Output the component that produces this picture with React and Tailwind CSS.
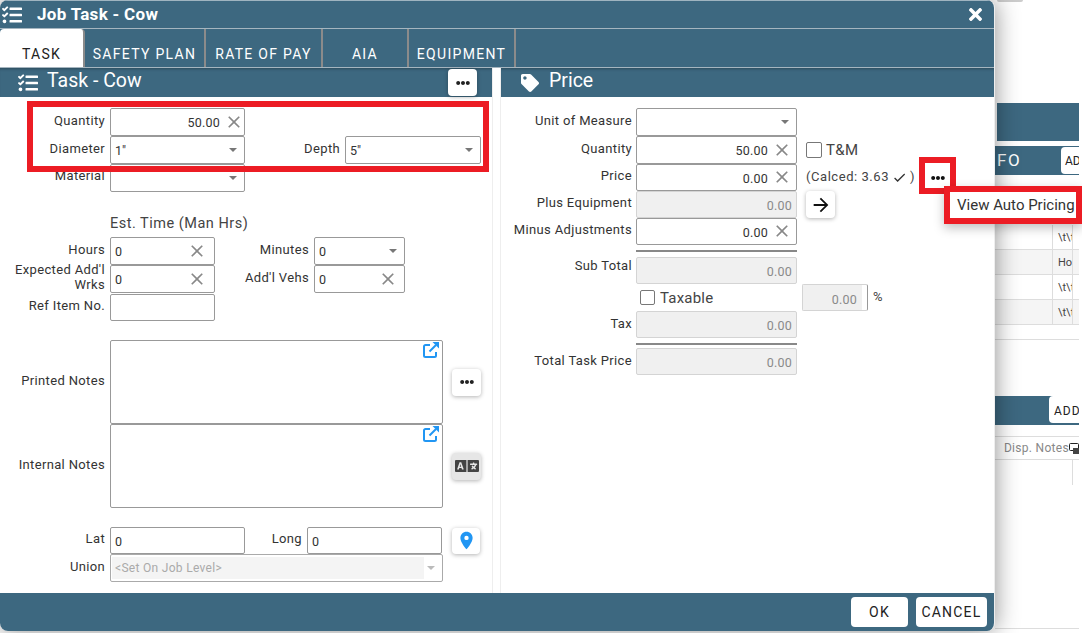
import { FaTasks, FaTag, FaTimes, FaEllipsisH, FaLanguage } from 'react-icons/fa';
import { MdCheck, MdArrowForward, MdLocationOn, MdClose } from 'react-icons/md';

const tabs = [
  { name: 'TASK', w: 'w-[85px]', active: true },
  { name: 'SAFETY PLAN', w: 'w-[121px]' },
  { name: 'RATE OF PAY', w: 'w-[117px]' },
  { name: 'AIA', w: 'w-[86px]' },
  { name: 'EQUIPMENT', w: 'w-[107px]' },
];

function Caret({ light }) {
  return (
    <svg width="8" height="4" viewBox="0 0 8 4" className="ml-auto mr-[7px] shrink-0">
      <path d="M0 0h8L4 4z" fill={light ? '#bbb' : '#777'} />
    </svg>
  );
}

function Field({ w, value, clear, right, disabled, h = 'h-[28px]' }) {
  return (
    <div className={`${w} ${h} shrink-0 flex items-center rounded-[2px] border ${disabled ? 'border-[#d4d4d4] bg-[#f0f0f0] text-[#8a8a8a]' : 'border-[#999] bg-white text-[#333]'} text-[12.5px] tracking-[0.2px]`}>
      <span className={`flex-1 pt-[3px] px-[4px] ${right ? 'text-right' : ''}`}>{value}</span>
      {clear && <MdClose className={`text-[#888] text-[20px] shrink-0 -mt-[1px] ${clear}`} />}
    </div>
  );
}

function Select({ w, value }) {
  return (
    <div className={`${w} h-[28px] shrink-0 flex items-center rounded-[2px] border border-[#999] bg-white text-[12.5px] text-[#333]`}>
      <span className="pl-[4px] pt-[3px]">{value}</span>
      <Caret />
    </div>
  );
}

function Label({ w, pb = 'pb-[4px]', children }) {
  return (
    <div className={`${w} ${pb} shrink-0 text-right text-[13px] leading-[15px] tracking-[0.35px] text-[#333]`}>{children}</div>
  );
}

function Row({ children, h = 'h-[28px]', className = '' }) {
  return <div className={`flex items-center ${h} ${className}`}>{children}</div>;
}

function WhiteButton({ children, className = '' }) {
  return (
    <div className={`flex items-center justify-center rounded-[4px] bg-white shadow-[0_1px_4px_rgba(0,0,0,0.3)] ${className}`}>{children}</div>
  );
}

function OpenIcon() {
  return (
    <svg width="16" height="16" viewBox="0 0 16 16" fill="none" stroke="#2196f3" strokeWidth="2" className="mr-[3px] mt-[1px]">
      <path d="M7 3H2.500a1.500 1.500 0 0 0-1.500 1.500v9A1.500 1.500 0 0 0 2.500 15h9a1.500 1.500 0 0 0 1.500-1.500V10" />
      <path d="M6.500 9.500L13 3" />
      <path d="M9.500 0h6.500v6.500z" fill="#2196f3" stroke="none" />
    </svg>
  );
}

function NoteBox() {
  return (
    <div className="w-[333px] h-[84px] shrink-0 flex justify-end rounded-[2px] border border-[#999] bg-white">
      <OpenIcon />
    </div>
  );
}

function SectionHeader({ icon, title, children }) {
  return (
    <div className="h-[29px] flex items-center bg-[#3d6880] text-white shadow-[inset_0_3px_3px_-2px_rgba(0,0,0,0.3)]">
      {icon}
      <span className="text-[19.5px] leading-none -mt-[3px]">{title}</span>
      {children}
    </div>
  );
}

function TaskPanel() {
  return (
    <div className="w-[493px] shrink-0 border-r border-[#eee]">
      <SectionHeader icon={<FaTasks className="text-[20px] ml-[18px] mr-[9px]" />} title="Task - Cow">
        <WhiteButton className="ml-auto mr-[15px] w-[29px] h-[27px] text-[#222] text-[14px]"><FaEllipsisH /></WhiteButton>
      </SectionHeader>
      <div className="pt-[11px]">
        <Row>
          <Label w="w-[105px]">Quantity</Label>
          <div className="ml-[5px]"><Field w="w-[135px]" value="50.00" right clear="mr-0" /></div>
        </Row>
        <Row>
          <Label w="w-[105px]">Diameter</Label>
          <div className="ml-[5px]"><Select w="w-[135px]" value={'1"'} /></div>
          <Label w="w-[95px]">Depth</Label>
          <div className="ml-[5px]"><Select w="w-[136px]" value={'5"'} /></div>
        </Row>
        <Row h="h-[27px]">
          <Label w="w-[105px]">Material</Label>
          <div className="ml-[5px]"><Select w="w-[135px]" value="" /></div>
        </Row>
        <div className="ml-[110px] mt-[24px] h-[22px] text-[14.5px] leading-[18px] tracking-[0.5px] text-[#444]">Est. Time (Man Hrs)</div>
        <Row>
          <Label w="w-[105px]">Hours</Label>
          <div className="ml-[5px]"><Field w="w-[105px]" value="0" clear="mr-[7px]" /></div>
          <Label w="w-[94px]">Minutes</Label>
          <div className="ml-[5px]"><Select w="w-[91px]" value="0" /></div>
        </Row>
        <Row>
          <Label w="w-[105px]">Expected Add'l Wrks</Label>
          <div className="ml-[5px]"><Field w="w-[105px]" value="0" clear="mr-[7px]" /></div>
          <Label w="w-[94px]">Add'l Vehs</Label>
          <div className="ml-[5px]"><Field w="w-[91px]" value="0" clear="mr-[6px]" /></div>
        </Row>
        <Row h="h-[27px]" className="mt-[1px]">
          <Label w="w-[105px]">Ref Item No.</Label>
          <div className="ml-[5px]"><Field w="w-[105px]" value="" h="h-[27px]" /></div>
        </Row>
        <div className="flex items-center mt-[19px]">
          <Label w="w-[105px]">Printed Notes</Label>
          <div className="ml-[5px]"><NoteBox /></div>
          <WhiteButton className="ml-[9px] w-[29px] h-[27px] text-[#222] text-[14px]"><FaEllipsisH /></WhiteButton>
        </div>
        <div className="flex items-center">
          <Label w="w-[105px]">Internal Notes</Label>
          <div className="ml-[5px]"><NoteBox /></div>
          <WhiteButton className="ml-[9px] w-[29px] h-[27px] !bg-[#e6e6e6] text-[#444] text-[24px]"><FaLanguage /></WhiteButton>
        </div>
        <Row h="h-[27px]" className="mt-[19px]">
          <Label w="w-[105px]">Lat</Label>
          <div className="ml-[5px]"><Field w="w-[135px]" value="0" h="h-[27px]" /></div>
          <Label w="w-[57px]">Long</Label>
          <div className="ml-[5px]"><Field w="w-[135px]" value="0" h="h-[27px]" /></div>
          <WhiteButton className="ml-[10px] w-[28px] h-[26px] text-[#2196f3] text-[21px]"><MdLocationOn /></WhiteButton>
        </Row>
        <Row>
          <Label w="w-[105px]">Union</Label>
          <div className="ml-[5px] w-[333px] h-[28px] flex items-center rounded-[2px] border border-[#aaa] bg-white">
            <div className="w-[312px] h-[22px] ml-[1px] pl-[3px] flex items-center bg-[#f4f4f4] text-[12px] tracking-[0.3px] text-[#aaa]">{'<Set On Job Level>'}</div>
            <Caret light />
          </div>
        </Row>
      </div>
    </div>
  );
}

function PriceRow({ label, labelPb, children, side, h }) {
  return (
    <Row h={h}>
      <Label w="w-[131px]" pb={labelPb}>{label}</Label>
      <div className="ml-[4px]">{children}</div>
      {side}
    </Row>
  );
}

function PricePanel() {
  return (
    <div className="ml-[7px] w-[494px] shrink-0 border-l border-[#eee]">
      <SectionHeader icon={<FaTag className="text-[18px] ml-[20px] mr-[10px]" />} title="Price" />
      <div className="pt-[11px]">
        <PriceRow label="Unit of Measure"><Select w="w-[161px]" value="" /></PriceRow>
        <PriceRow
          label="Quantity"
          side={
            <div className="ml-[9px] flex items-center text-[15px] text-[#444]">
              <span className="w-[16px] h-[16px] rounded-[2px] border border-[#777] bg-white" />
              <span className="ml-[4px] tracking-[0.4px]">T&amp;M</span>
            </div>
          }
        >
          <Field w="w-[161px]" value="50.00" right clear="mr-[4px]" />
        </PriceRow>
        <PriceRow
          label="Price"
          h="h-[27px]"
          side={
            <div className="ml-[9px] flex items-center text-[13px] tracking-[0.55px] text-[#444]">
              <span className="pb-[2px]">(Calced: 3.63</span>
              <MdCheck className="text-[15px] text-[#333] mx-[3px]" />
              <span className="pb-[2px]">)</span>
              <WhiteButton className="ml-[10px] w-[26px] h-[26px] !shadow-none text-[#111] text-[14px]"><FaEllipsisH /></WhiteButton>
            </div>
          }
        >
          <Field w="w-[161px]" value="0.00" right clear="mr-[4px]" h="h-[27px]" />
        </PriceRow>
        <PriceRow
          label="Plus Equipment"
          h="h-[27px]"
          side={<WhiteButton className="ml-[9px] w-[29px] h-[27px] text-[#111] text-[22px]"><MdArrowForward /></WhiteButton>}
        >
          <Field w="w-[161px]" value="0.00" right disabled h="h-[27px]" />
        </PriceRow>
        <PriceRow label="Minus Adjustments" h="h-[27px]"><Field w="w-[161px]" value="0.00" right clear="mr-[4px]" h="h-[27px]" /></PriceRow>
        <div className="ml-[135px] w-[161px] h-[2px] mt-[5px] mb-[5px] bg-[#888]" />
        <PriceRow label="Sub Total" labelPb="pb-[10px]" h="h-[27px]"><Field w="w-[161px]" value="0.00" right disabled h="h-[27px]" /></PriceRow>
        <Row h="h-[27px]">
          <span className="ml-[139px] w-[15px] h-[15px] rounded-[2px] border border-[#777] bg-white" />
          <span className="ml-[5px] w-[142px] pt-[2px] text-[15px] tracking-[0.2px] text-[#444]">Taxable</span>
          <div className="w-[66px] h-[27px] rounded-[2px] border border-[#d4d4d4] border-r-[#999] bg-white">
            <div className="w-[59px] h-full pr-[5px] pt-[6px] text-right bg-[#f0f0f0] text-[12.5px] tracking-[0.2px] text-[#8a8a8a]">0.00</div>
          </div>
          <span className="ml-[5px] text-[13px] text-[#444] pb-[1px]">%</span>
        </Row>
        <PriceRow label="Tax" labelPb="pb-[2px]" h="h-[27px]"><Field w="w-[161px]" value="0.00" right disabled h="h-[27px]" /></PriceRow>
        <div className="ml-[135px] w-[161px] h-[2px] mt-[5px] mb-[3px] bg-[#888]" />
        <PriceRow label="Total Task Price" labelPb="pb-[2px]" h="h-[27px]"><Field w="w-[161px]" value="0.00" right disabled h="h-[27px]" /></PriceRow>
      </div>
    </div>
  );
}

// the page that sits behind the dialog, only a sliver of it shows
function BehindPage() {
  const rows = [
    { text: '\\t\\t', bg: 'bg-white' },
    { text: 'Ho', bg: 'bg-[#f5f5f5]' },
    { text: '\\t\\t', bg: 'bg-white' },
    { text: '\\t\\t', bg: 'bg-[#f5f5f5]' },
  ];
  return (
    <div className="w-[84px] h-[629px] shrink-0 overflow-hidden bg-white border-b border-[#ddd]">
      <div className="ml-[2px] w-[26px] h-[2px] rounded-b-[2px] bg-[#ccc]" />
      <div className="ml-[2px] mt-[101px] h-[38px] bg-[#3d6880]" />
      <div className="mt-[5px] h-[29px] flex items-center justify-between bg-[#3d6880] text-white">
        <span className="text-[17px] tracking-[1.5px] pl-[2px]">FO</span>
        <span className="w-[18px] h-[27px] pl-[4px] pt-[5px] rounded-l-[4px] bg-white text-[12px] text-[#222] overflow-hidden">AD</span>
      </div>
      <div className="mt-[50px] border-b border-[#ddd] h-[115px]">
        {rows.map((r, i) => (
          <div key={i} className={`h-[25px] flex border-b border-[#ddd] text-[11px] text-[#444] ${r.bg}`}>
            <div className="w-[58px] border-r border-[#ddd]" />
            <div className="w-[20px] pl-[5px] pt-[5px] border-r border-[#ddd] overflow-hidden">{r.text}</div>
          </div>
        ))}
      </div>
      <div className="mt-[56px] h-[29px] flex justify-end bg-[#3d6880]">
        <span className="w-[30px] h-[27px] pl-[5px] pt-[6px] rounded-l-[4px] bg-white text-[12px] tracking-[1px] text-[#222] overflow-hidden">ADD</span>
      </div>
      <div className="mt-[11px] h-[24px] flex items-center justify-end border-y border-[#ddd] text-[12px] tracking-[0.3px] text-[#888]">
        <span className="whitespace-nowrap">Disp. Notes</span>
        <svg width="10" height="11" viewBox="0 0 10 11" className="shrink-0">
          <rect x="0.500" y="0.500" width="9" height="7" rx="1" fill="none" stroke="#222" />
          <rect x="4" y="5" width="6" height="6" fill="#444" />
        </svg>
      </div>
      <div className="h-[25px] flex bg-white">
        <div className="w-[78px] border-r border-[#ddd]" />
      </div>
    </div>
  );
}

export default function App() {
  return (
    <div className="relative flex w-[1082px] h-[633px] overflow-hidden bg-white font-['Roboto',sans-serif]">
      <div className="relative z-10 w-[995px] h-[631px] shrink-0 flex flex-col rounded-[8px] overflow-hidden bg-white border-r border-[#eee] shadow-[0_0_24px_rgba(0,0,0,0.45)]">
        <div className="h-[28px] shrink-0 flex items-center bg-[#3d6880] text-white border-t border-[#9fb4c0]">
          <FaTasks className="text-[20px] ml-[2px] mr-[15px]" />
          <span className="text-[17px] font-bold tracking-[0.3px]">Job Task - Cow</span>
          <FaTimes className="ml-auto mr-[9px] text-[19px]" />
        </div>
        <div className="h-[40px] shrink-0 flex bg-[#3d6880] border-y border-[#a5b5bf]">
          {tabs.map((t) => (
            <div
              key={t.name}
              className={`${t.w} shrink-0 flex items-center justify-center pt-[12px] text-[14px] tracking-[1.3px] whitespace-nowrap overflow-hidden border-r-2 border-[#8b8b8b] ${t.active ? 'bg-white text-[#222] rounded-t-[4px] border-r-0' : 'text-white'}`}
            >
              {t.name}
            </div>
          ))}
        </div>
        <div className="flex-1 flex min-h-0">
          <TaskPanel />
          <PricePanel />
        </div>
        <div className="h-[38px] shrink-0 flex items-center justify-end gap-[8px] pr-[7px] bg-[#3d6880]">
          <div className="w-[57px] h-[30px] flex items-center justify-center rounded-[4px] bg-white text-[14px] tracking-[1.2px] text-[#222]">OK</div>
          <div className="w-[71px] h-[30px] flex items-center justify-center rounded-[4px] bg-white text-[14px] tracking-[1.2px] text-[#222]">CANCEL</div>
        </div>
      </div>
      <BehindPage />

      {/* red annotation boxes drawn over the screenshot */}
      <div className="absolute z-20 left-[27px] top-[101px] w-[462px] h-[71px] border-[6px] border-[#ec1c24]" />
      <div className="absolute z-20 left-[919px] top-[157px] w-[37px] h-[37px] border-[6px] border-[#ec1c24]" />
      <div className="absolute z-30 left-[944px] top-[186px] w-[138px] h-[38px] flex items-center pl-[7px] bg-white border-[6px] border-[#ec1c24] text-[15px] text-[#333] whitespace-nowrap shadow-[0_4px_10px_rgba(0,0,0,0.25)]">
        View Auto Pricing
      </div>
    </div>
  );
}
